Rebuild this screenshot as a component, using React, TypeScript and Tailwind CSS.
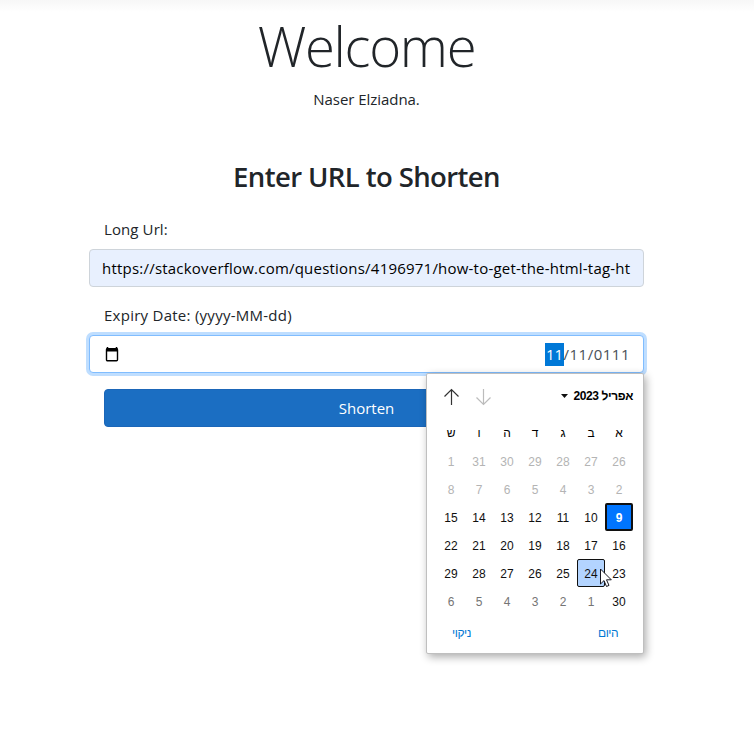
import React from "react";

const dayNames = ["א", "ב", "ג", "ד", "ה", "ו", "ש"];

const weeks = [
  [26, 27, 28, 29, 30, 31, 1],
  [2, 3, 4, 5, 6, 7, 8],
  [9, 10, 11, 12, 13, 14, 15],
  [16, 17, 18, 19, 20, 21, 22],
  [23, 24, 25, 26, 27, 28, 29],
  [30, 1, 2, 3, 4, 5, 6],
];

function dayClass(week: number, day: number) {
  if (week < 2) return "text-[#b4b4b4]";
  if (week === 2 && day === 9) return "rounded-[2px] border-2 border-[#101010] bg-[#0075ff] font-bold text-white";
  if (week === 4 && day === 24) return "rounded-[2px] border border-[#101010] bg-[#b3d4ff] text-[#101010]";
  if (week === 5 && day !== 30) return "text-[#757575]";
  return "text-[#101010]";
}

function Arrow({ down = false, color }: { down?: boolean; color: string }) {
  return (
    <svg width="16" height="18" viewBox="0 0 16 18" fill="none" stroke={color} strokeWidth="1.2">
      {down ? <path d="M8.5 1V16.5M1.5 9.5L8.5 16.5L15.5 9.5" /> : <path d="M8.5 17V1.5M1.5 8.5L8.5 1.5L15.5 8.5" />}
    </svg>
  );
}

function Calendar() {
  return (
    <div
      dir="rtl"
      className="absolute top-[373px] left-[426px] h-[281px] w-[218px] rounded-[2px] border border-[#bfbfbf] bg-white font-['Liberation_Sans',sans-serif] text-[12px] text-black shadow-[2px_3px_9px_rgba(0,0,0,0.33)]"
    >
      <div className="flex h-[45px] items-center justify-between pr-[10px] pl-[16px]">
        <div className="flex items-center gap-[6px] font-bold whitespace-nowrap">
          <span className="-mt-[2px] tracking-[-0.4px]">אפריל 2023</span>
          <svg width="7" height="4" viewBox="0 0 7 4" className="-mt-[2px]">
            <path d="M0 0H7L3.5 4Z" fill="#101010" />
          </svg>
        </div>
        <div dir="ltr" className="flex gap-4">
          <Arrow color="#333333" />
          <Arrow down color="#bcbcbc" />
        </div>
      </div>
      <div className="grid grid-cols-[repeat(7,28px)] pr-[10px]">
        {dayNames.map((name) => (
          <div key={name} className="flex h-7 items-center justify-center">
            {name}
          </div>
        ))}
        {weeks.map((week, w) =>
          week.map((day) => (
            <div key={`${w}-${day}`} className={`flex h-7 items-center justify-center ${dayClass(w, day)}`}>
              <span className="pt-[2px]">{day}</span>
            </div>
          )),
        )}
      </div>
      <div className="flex justify-between pt-[11px] pr-[25px] pl-[25px] text-[12px] leading-[14px] text-[#0078d4]">
        <span className="tracking-[-0.5px]">היום</span>
        <span className="tracking-[-0.4px]">ניקוי</span>
      </div>
    </div>
  );
}

export default function App() {
  return (
    <div className="relative h-[748px] w-[754px] overflow-hidden bg-white font-['Open_Sans','Noto_Sans',sans-serif] text-[16px] leading-6 text-[#212529]">
      <div className="h-[12px] bg-linear-to-b from-[#f7f7f7] to-white" />
      <main className="ml-[89px] flex w-[555px] flex-col">
        <div className="text-center">
          <h1 className="mt-[1px] h-[70px] text-[54.5px] leading-[67px] font-light tracking-[-1.3px]">
            <span>Welcome</span>
          </h1>
          <p className="mt-[4px] text-[15px] tracking-[-0.05px]">
            <span>Naser Elziadna.</span>
          </p>
          <h2 className="mt-[49px] h-[34px] text-[27.5px] leading-[34px] font-semibold tracking-[-0.6px]">
            <span>Enter URL to Shorten</span>
          </h2>
        </div>
        <label className="mt-[23px] ml-[15px] text-[15px] tracking-[0.1px]">
          <span>Long Url:</span>
        </label>
        <div className="mt-[8px] flex h-[38px] items-center rounded-[4px] border border-[#ced4da] bg-[#e8f0fe] px-3 text-[15px] tracking-[0.215px] whitespace-nowrap text-black">
          <span>https://stackoverflow.com/questions/4196971/how-to-get-the-html-tag-ht</span>
        </div>
        <label className="mt-[16px] ml-[15px] text-[15px] tracking-[0.26px]">
          <span>Expiry Date: (yyyy-MM-dd)</span>
        </label>
        <div className="mt-[8px] flex h-[38px] items-center justify-between rounded-[4px] border border-[#80bdff] bg-white pr-[13px] pl-[15px] text-[15px] tracking-[0.5px] text-[#495057] shadow-[0_0_0_3px_#bfdeff]">
          <svg width="14" height="15" viewBox="0 0 14 15" fill="none">
            <path d="M2.5 0V2M11.5 0V2" stroke="black" strokeWidth="1.5" />
            <rect x="1.5" y="1.8" width="11" height="12" rx="1" stroke="black" strokeWidth="1.4" />
            <path d="M1 1.5H13V4.5H1Z" fill="black" />
          </svg>
          <span className="flex items-center">
            <span className="flex h-[23px] w-[19px] items-center justify-center bg-[#0078d7] pl-px tracking-normal text-white">11</span>
            <span>/11/0111</span>
          </span>
        </div>
        <button className="mx-[15px] mt-[16px] h-[38px] rounded-[4px] border border-[#1b66b8] bg-[#1b6ec2] text-center text-[15px] text-white">
          <span>Shorten</span>
        </button>
      </main>
      <Calendar />
      <svg className="absolute top-[568px] left-[600px]" width="13" height="20" viewBox="0 0 13 20">
        <path d="M0.5 1V16L4 12.6L6.5 18.5L9 17.4L6.5 11.8H11.3Z" fill="white" stroke="#15151f" strokeWidth="1" />
      </svg>
    </div>
  );
}
